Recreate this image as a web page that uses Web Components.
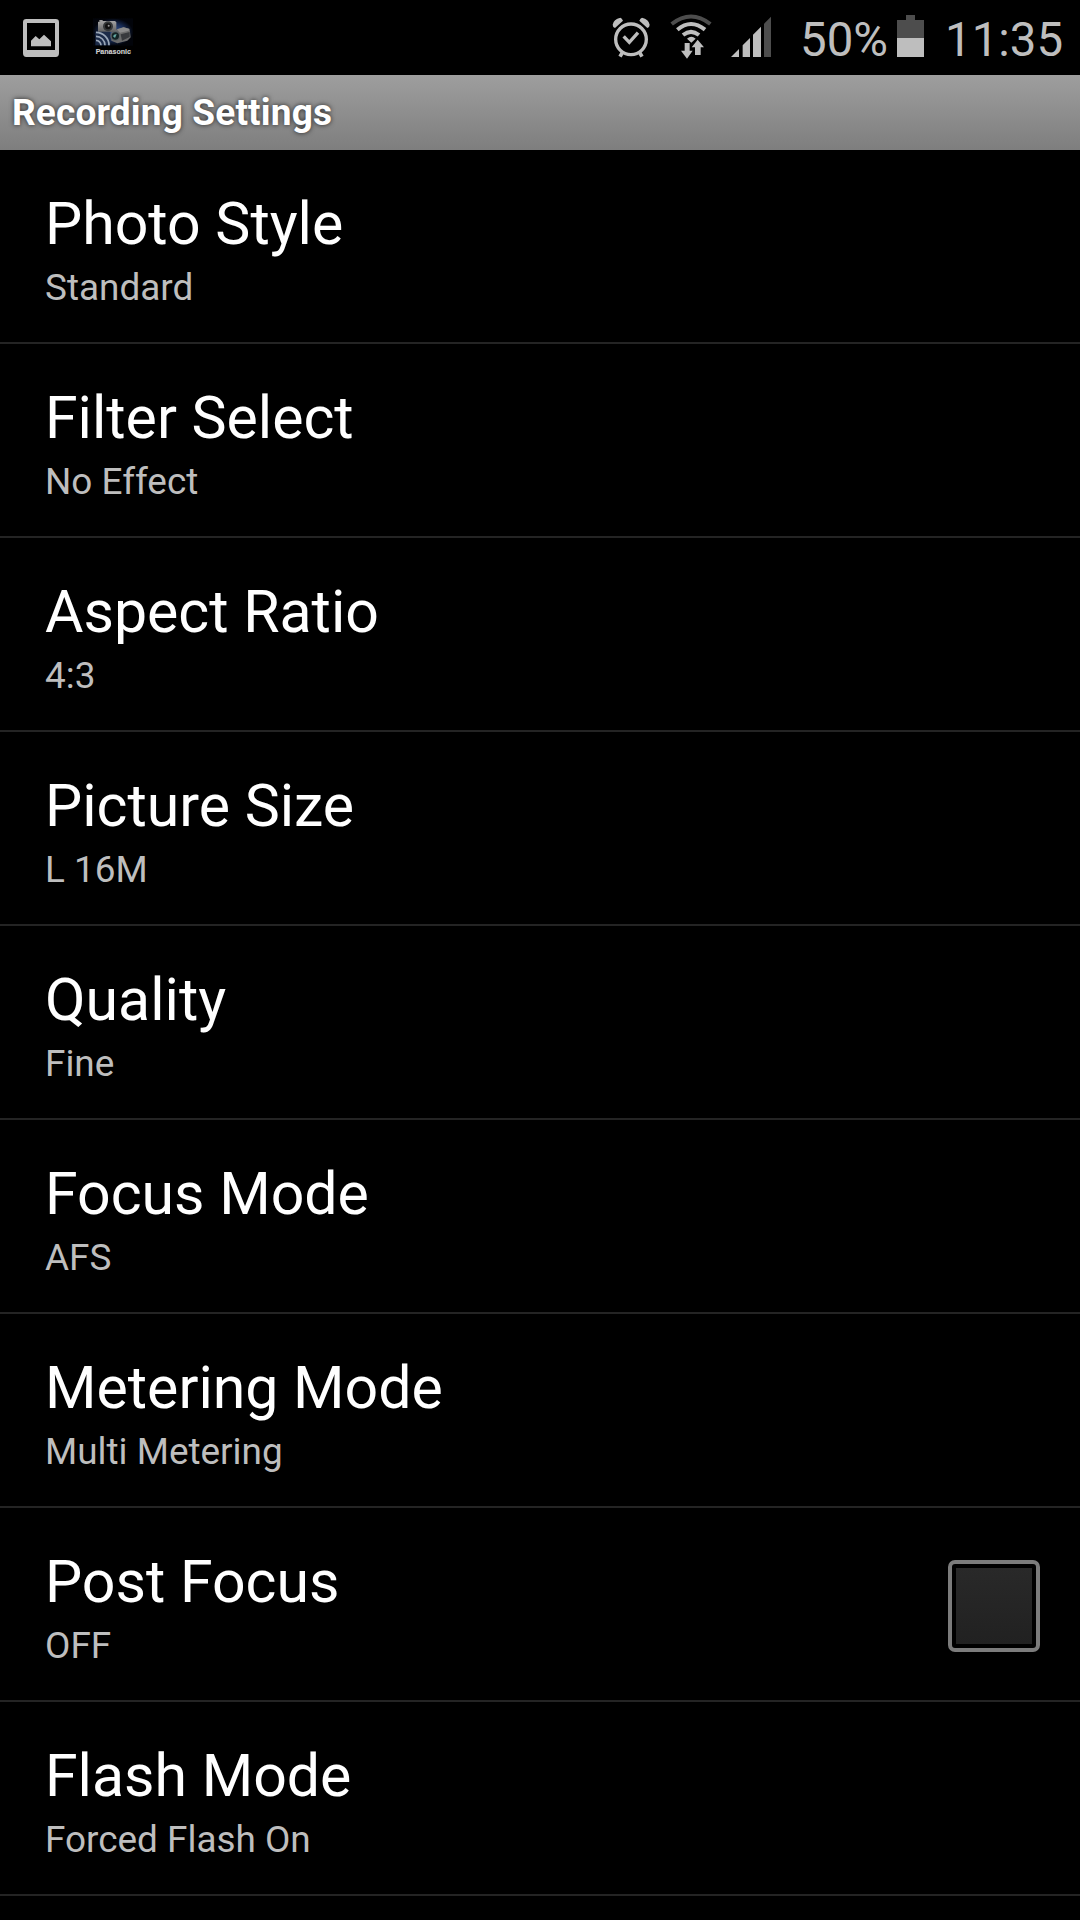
<!DOCTYPE html>
<html lang="en">
<head>
<meta charset="utf-8">
<title>Recording Settings</title>
<style>
html,body{margin:0;background:#000}
body{width:1080px;height:1920px;overflow:hidden;font-family:Roboto,sans-serif}
</style>
</head>
<body>
<settings-screen></settings-screen>
<script>
const define = (name, html) => customElements.define(name, class extends HTMLElement {
  constructor() {
    super();
    const t = document.createElement('template');
    t.innerHTML = html;
    this.attachShadow({mode: 'open'}).append(t.content.cloneNode(true));
  }
});

define('photo-icon', `<style>:host{display:block;width:40px;height:75px}svg{display:block}</style>
<svg width="40" height="75" viewBox="60 0 120 225"><path fill="#bebebe" fill-rule="evenodd" d="M79 57H167Q177 57 177 67V160Q177 171 167 171H79Q69 171 69 160V67Q69 57 79 57ZM81 69V150H165V69Z"/><path fill="#bebebe" d="M93 139V122L107 108L118 118L132 104L153 124V139Z"/></svg>`);

define('camera-app-icon', `<style>:host{display:block;width:45px;height:75px}svg{display:block}text{font:bold 20px "Liberation Sans",sans-serif}</style>
<svg width="45" height="75" viewBox="270 0 135 225">
<defs><radialGradient id="g"><stop offset="0" stop-color="#3c5a94"/><stop offset=".6" stop-color="#182c56"/><stop offset="1" stop-color="#02040a"/></radialGradient>
<linearGradient id="b" x2="0" y2="1"><stop stop-color="#a4a4a4"/><stop offset="1" stop-color="#606060"/></linearGradient></defs>
<rect x="279" y="55" width="120" height="82" fill="url(#g)"/>
<path d="M294 66L302 63H345L349 67V96H294Z" fill="url(#b)"/><rect x="298" y="60" width="10" height="4" fill="#999"/>
<circle cx="324" cy="79" r="15" fill="#35383a"/><circle cx="324" cy="79" r="9" fill="#111"/><circle cx="326" cy="77" r="3" fill="#999"/>
<rect x="286" y="95" width="45" height="41" fill="#1c2b48"/>
<g fill="none" stroke="#9aa7b8" stroke-width="5"><path d="M288 97A39 39 0 0 1 327 136M288 109A27 27 0 0 1 315 136M288 121A15 15 0 0 1 303 136"/></g>
<path d="M334 99L346 90L372 82L389 88L392 112L382 122L352 130L334 122Z" fill="#6c6c6c"/>
<path d="M351 88L370 82L388 86L386 92L360 98Z" fill="#8c8c8c"/><path d="M362 103L389 96V111L366 122Z" fill="#383a3d"/>
<circle cx="346" cy="108" r="15" fill="#5d6366"/><circle cx="346" cy="108" r="11" fill="#142325"/><path d="M339 109Q342 101 350 103L345 114Z" fill="#63a8a2"/>
<text x="287" y="162" textLength="106" lengthAdjust="spacingAndGlyphs" fill="#d0d0d0" stroke="#d0d0d0" stroke-width=".4">Panasonic</text></svg>`);

define('alarm-icon', `<style>:host{display:block;width:43px;height:75px}svg{display:block}</style>
<svg width="43" height="75" viewBox="60 0 129 225"><g fill="none" stroke="#bebebe"><circle cx="123" cy="118" r="46" stroke-width="10"/><path d="M101 109L118 127L144 98" stroke-width="10"/><path d="M98 156L90 170M148 156L156 170" stroke-width="11"/></g><path fill="#bebebe" d="M68 74Q71 57 91 53Q96 55 99 62L75 84Q68 82 68 74ZM179 74Q176 57 156 53Q151 55 148 62L172 84Q179 82 179 74Z"/></svg>`);

define('wifi-icon', `<style>:host{display:block;width:46px;height:75px}svg{display:block}</style>
<svg width="46" height="75" viewBox="234 0 138 225"><g fill="none" stroke-width="12"><path d="M245 72Q303 27 361 72" stroke="#4d4d4d"/><path d="M262 89Q303 55 345 89M279 105Q303 86 327 105" stroke="#bebebe"/></g><path fill="#bebebe" d="M291 116Q304 105 317 116L304 128ZM284 129H299V152H308L291 176L273 152H284ZM323 119L342 142H332V165H315V142H305Z"/></svg>`);

define('signal-icon', `<style>:host{display:block;width:44px;height:75px}svg{display:block}</style>
<svg width="44" height="75" viewBox="417 0 132 225"><path fill="#bebebe" d="M423 171L447 147V171ZM458 136L480 114V171H458ZM489 104L513 80V171H489Z"/><path fill="#4d4d4d" d="M522 71L543 50V171H522Z"/></svg>`);

define('battery-icon', `<style>:host{display:block;width:31px;height:75px}svg{display:block}</style>
<svg width="31" height="75" viewBox="345 0 93 225"><path fill="#4d4d4d" d="M378 45H405V60H432V114H351V60H378Z"/><path fill="#bebebe" d="M351 114H432V171H351Z"/></svg>`);

define('status-bar', `<style>
:host{display:flex;height:75px;background:#000;color:#bebebe;font-size:47.4px;line-height:75px;padding:0 16px 0 20px;box-sizing:border-box;justify-content:space-between}
div{display:flex}.l{gap:30px}.r{gap:15px}
.pct{width:95px;margin-left:12px}.time{width:119px;margin-left:4px}battery-icon{margin-left:-15px}
span{padding-top:3px;box-sizing:border-box;white-space:nowrap}
</style><div class="l"><photo-icon></photo-icon><camera-app-icon></camera-app-icon></div>
<div class="r"><alarm-icon></alarm-icon><wifi-icon></wifi-icon><signal-icon></signal-icon><span class="pct">50%</span><battery-icon></battery-icon><span class="time">11:35</span></div>`);

define('title-bar', `<style>:host{display:block;height:75px;box-sizing:border-box;padding:0 12px;background:linear-gradient(#9e9e9e,#7e7e7e);color:#fff;font-size:37px;letter-spacing:.16px;font-weight:700;line-height:75px;text-shadow:0 0 5px rgba(0,0,0,.75)}</style><slot></slot>`);

define('check-box', `<style>:host{display:block;width:92px;height:92px;box-sizing:border-box;border:4px solid #7c7c7c;border-radius:7px;padding:4px;background:#000}
div{height:100%;background:linear-gradient(#292929,#212121)}</style><div></div>`);

define('setting-row', `<style>
:host{display:flex;height:194px;box-sizing:border-box;border-bottom:2px solid #242424;padding:39px 40px 0 45px;justify-content:space-between}
.t{font-size:59px;line-height:70px;color:#fff}.s{font-size:36.9px;line-height:42px;margin-top:8px;color:#bebebe}
::slotted(check-box){margin-top:13px}
</style><div><div class="t"><slot></slot></div><div class="s"><slot name="value"></slot></div></div><slot name="control"></slot>`);

define('settings-screen', `<style>:host{display:flex;flex-direction:column;height:1920px;overflow:hidden}setting-row,status-bar,title-bar{flex:none}</style>
<status-bar></status-bar><title-bar>Recording Settings</title-bar>` +
[['Photo Style','Standard'],['Filter Select','No Effect'],['Aspect Ratio','4:3'],['Picture Size','L 16M'],['Quality','Fine'],['Focus Mode','AFS'],['Metering Mode','Multi Metering'],['Post Focus','OFF'],['Flash Mode','Forced Flash On']]
.map(([t, v]) => `<setting-row>${t}<span slot="value">${v}</span>${t === 'Post Focus' ? '<check-box slot="control"></check-box>' : ''}</setting-row>`).join(''));
</script>
</body>
</html>
